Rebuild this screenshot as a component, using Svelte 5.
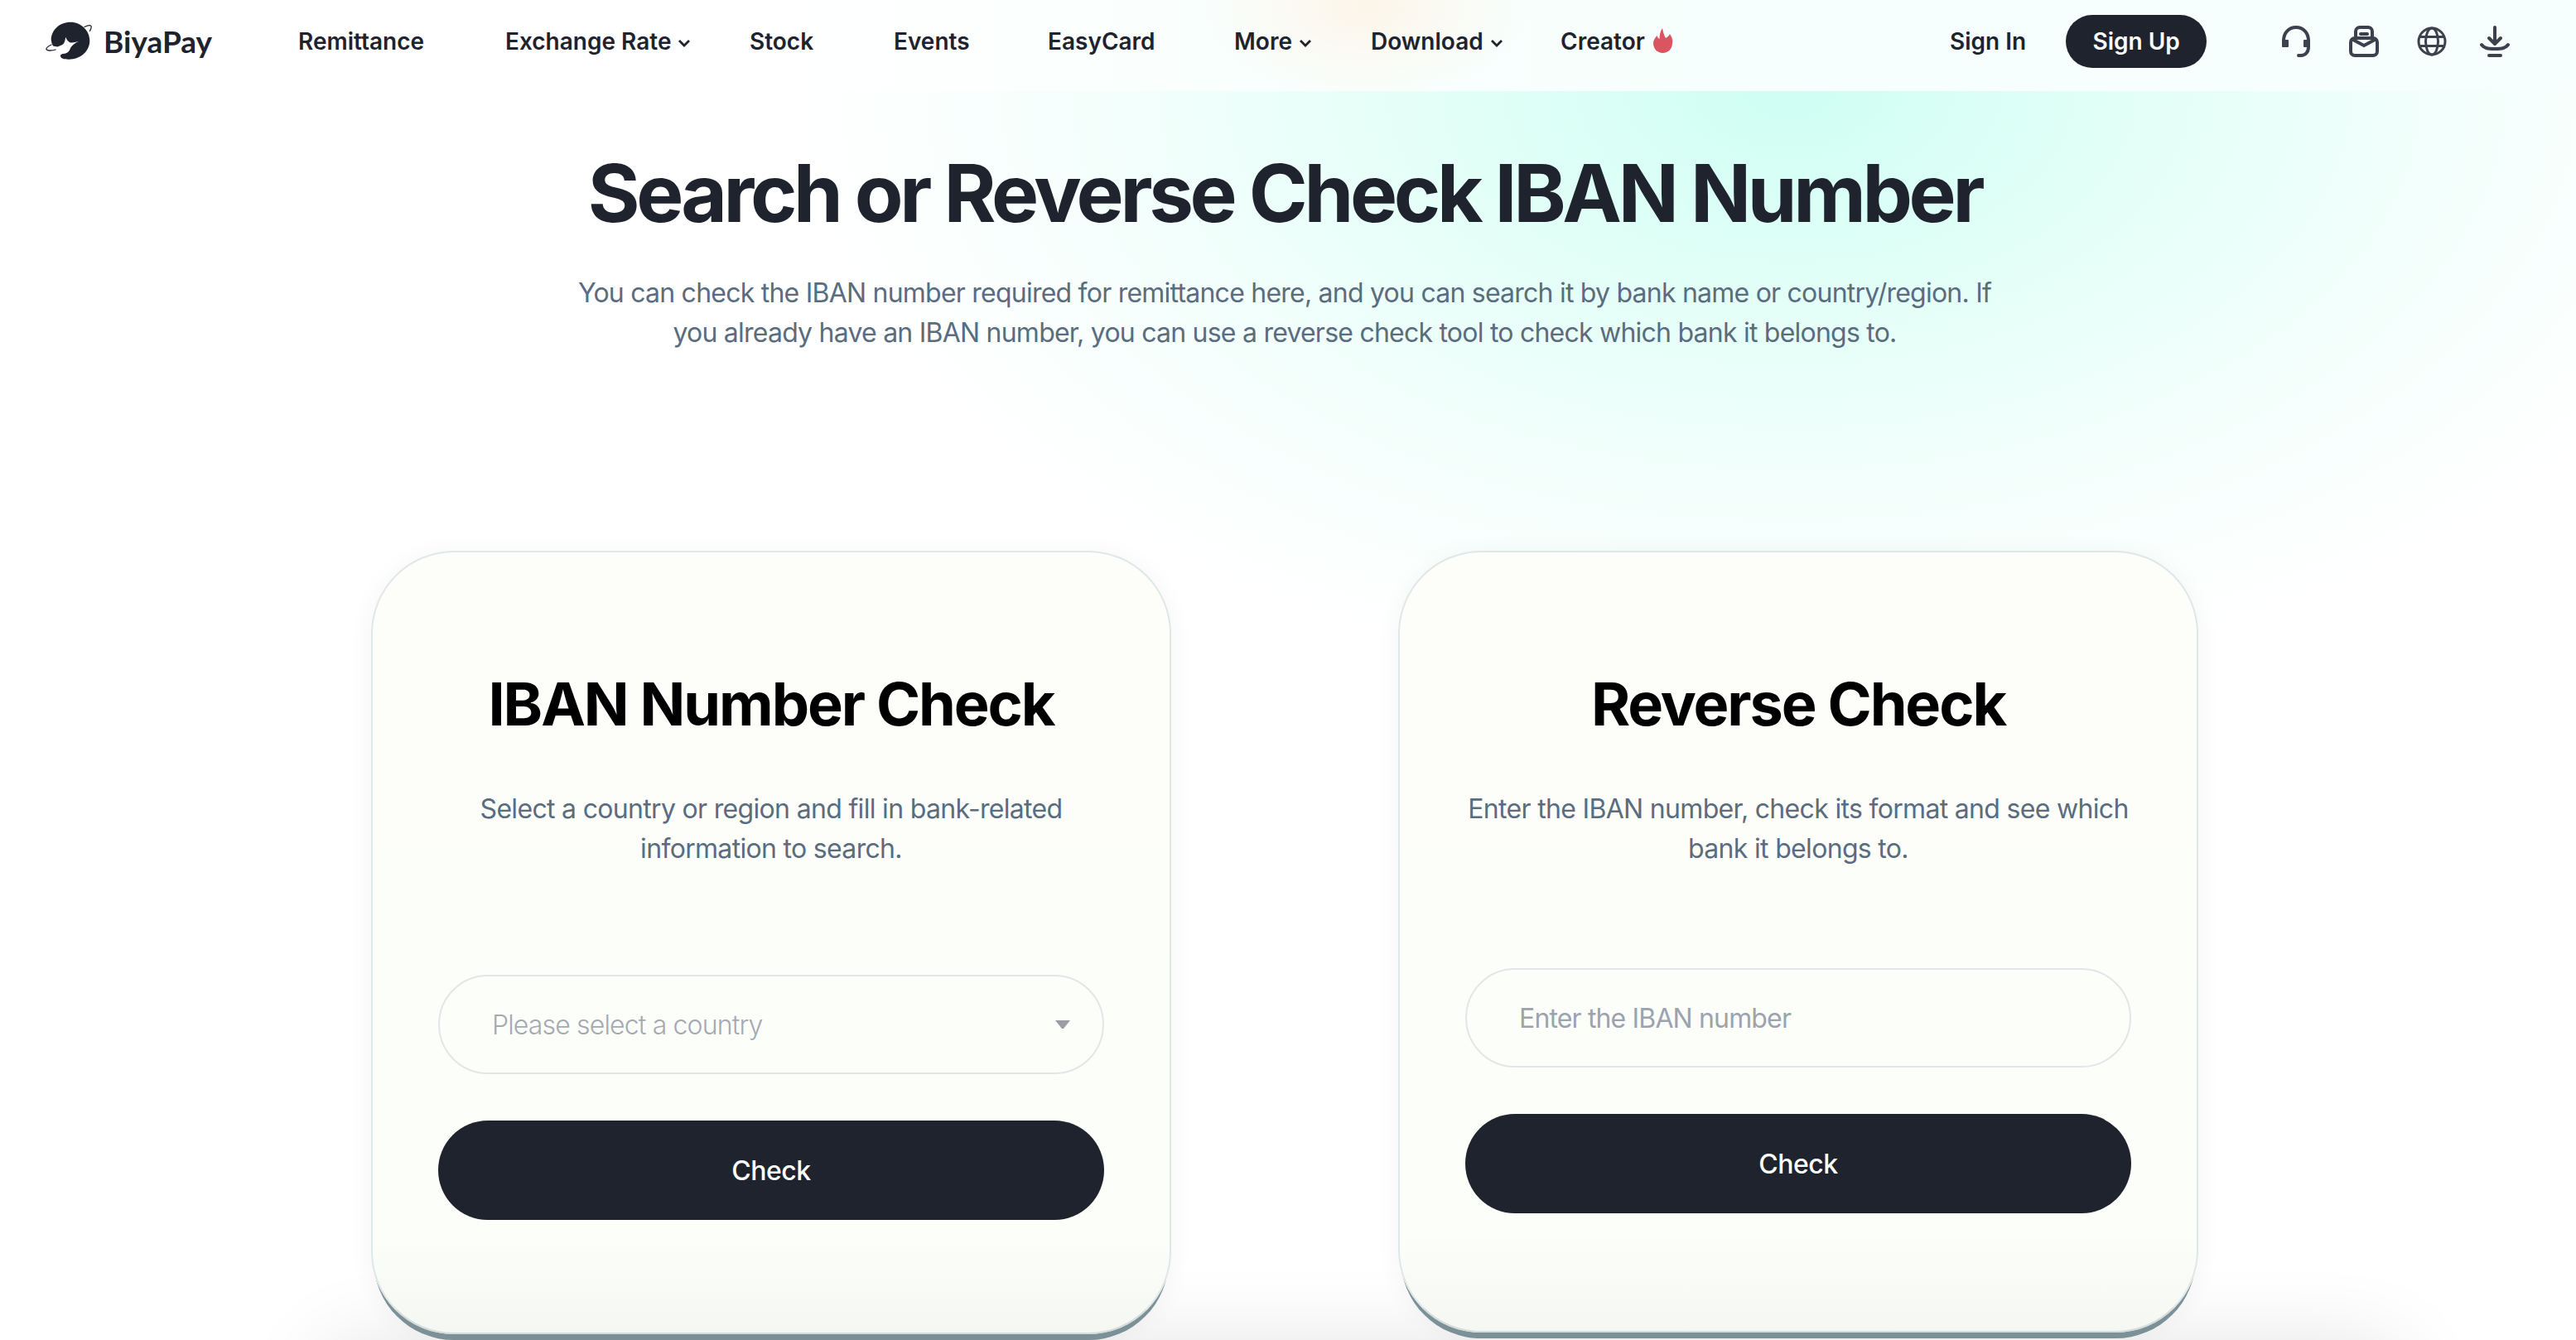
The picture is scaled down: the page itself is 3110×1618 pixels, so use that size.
<script>
  const navItems = [
    { label: 'Remittance', width: 250 },
    { label: 'Exchange Rate', width: 295, caret: true },
    { label: 'Stock', width: 174 },
    { label: 'Events', width: 186 },
    { label: 'EasyCard', width: 225 },
    { label: 'More', width: 165, caret: true },
    { label: 'Download', width: 229, caret: true }
  ];
</script>

<div class="page">
  <header class="topbar">
    <div class="brand">
      <svg class="logo" viewBox="0 -1 56 50" width="56" height="50" aria-hidden="true">
        <path fill="#1e232e" d="M6.700 21C7 9 17-.3 30-.3S53.300 10 53.300 22C53.300 35 42 44.700 28 44.700c-7 0-10-1.700-10-4.200 0-2 2.500-2.800 5.300-2.800q5.700-1.700 6.700-6.700 3-5 10-8.300-6 2.300-10 1.700-4-1.400-5.700-6.700-.8 5.300-2 7.300-2.300 3-8 4.400L9 28.400Q7 25 6.700 21z" />
        <path fill="none" stroke="#1e232e" stroke-width="1.300" stroke-linecap="round" d="M7 27c-4 2-6.500 4-6 5.500.6 1.800 6 2 11 .5M47 5.500c3-1.500 7-2.500 8-1 .7 1.200-.5 4-1.500 6" />
      </svg>
      <span class="brand-name">BiyaPay</span>
    </div>

    <nav class="nav">
      {#each navItems as item}
        <a class="nav-link" href="#top" style="width: {item.width}px">
          {item.label}
          {#if item.caret}
            <svg class="caret" viewBox="0 0 16 10" width="16" height="10" aria-hidden="true">
              <path d="M2 2l6 6 6-6" fill="none" stroke="#1e232e" stroke-width="2.800" />
            </svg>
          {/if}
        </a>
      {/each}
      <a class="nav-link" href="#top">
        Creator
        <svg class="flame" viewBox="0 0 24 30" width="24" height="30" aria-hidden="true">
          <path fill="#d95560" d="M11 0c1 5 2 9 4 12 2-1 4-3 5-5 2 3 4 7 3 11 0 7-5 12-11.500 12S0 25 0 18c0-3 2-6 4.500-9 .5 2 1.500 3 3 4 0-5 1-9 3.500-13z" />
        </svg>
      </a>
    </nav>

    <div class="account">
      <a class="sign-in" href="#top">Sign In</a>
      <button class="sign-up">Sign Up</button>
    </div>

    <div class="tools">
      <svg viewBox="0 0 36 38" width="36" height="38" fill="none" stroke="#3c424d" stroke-width="4" aria-hidden="true">
        <path d="M3 24V18C3 9 9 2 18 2s15 7 15 16v8c0 6-4 10-9 10h-3" stroke-linecap="round" />
        <rect x="1" y="17" width="8" height="9" rx="1" fill="#3c424d" stroke="none" />
        <rect x="27" y="17" width="6" height="9" rx="1" fill="#3c424d" stroke="none" />
      </svg>
      <svg viewBox="0 0 36 38" width="36" height="38" fill="none" stroke="#3c424d" stroke-width="4" aria-hidden="true">
        <path d="M8 15V7a5 5 0 0 1 5-5h10a5 5 0 0 1 5 5v8" />
        <rect x="2" y="15" width="32" height="21" rx="5" />
        <path d="M3 16l15 8 15-8" />
        <path d="M14 10h8" stroke-linecap="round" />
      </svg>
      <svg viewBox="0 0 36 36" width="36" height="36" fill="none" stroke="#3c424d" stroke-width="3" aria-hidden="true">
        <circle cx="18" cy="18" r="16" />
        <ellipse cx="18" cy="18" rx="7.500" ry="16" />
        <path d="M3 12.500h30M3 23.500h30" />
      </svg>
      <svg class="tool-last" viewBox="0 0 36 38" width="36" height="38" fill="none" stroke="#3c424d" stroke-width="4" stroke-linecap="round" aria-hidden="true">
        <path d="M18 2v20M11 15l7 7 7-7" stroke-linejoin="round" />
        <path d="M2 23c3 4 7 5 16 5s13-1 16-5" />
        <path d="M11 36h14" />
      </svg>
    </div>
  </header>

  <main class="content">
    <h1>Search or Reverse Check IBAN Number</h1>
    <p class="intro">
      You can check the IBAN number required for remittance here, and you can search it by bank name or country/region. If you already have an IBAN number, you can use a reverse check tool to check which bank it belongs to.
    </p>

    <div class="cards">
      <section class="card">
        <h2>IBAN Number Check</h2>
        <p class="desc">Select a country or region and fill in bank-related information to search.</p>
        <div class="field select-field">
          <span class="select-text">Please select a country</span>
          <svg viewBox="0 0 20 12" width="20" height="12" aria-hidden="true">
            <path d="M1 1h18l-8 10h-2z" fill="#9a9da1" />
          </svg>
        </div>
        <button class="check">Check</button>
      </section>

      <section class="card card-short">
        <h2>Reverse Check</h2>
        <p class="desc">Enter the IBAN number, check its format and see which bank it belongs to.</p>
        <input class="field iban-input" placeholder="Enter the IBAN number" />
        <button class="check">Check</button>
      </section>
    </div>

    <div class="lower"></div>
  </main>
</div>

<style>
  :global(body) {
    margin: 0;
    font-family: Inter, "Liberation Sans", sans-serif;
    color: #1e232e;
  }

  .page {
    width: 3110px;
    height: 1618px;
    overflow: hidden;
    background: radial-gradient(ellipse 1200px 720px at 2160px 110px, #cffef3 0%, #e0fff7 30%, #f0fffb 60%, #fafffe 85%, #ffffff 100%);
  }

  .topbar {
    height: 110px;
    display: flex;
    align-items: center;
    padding: 0 0 10px 55px;
    box-sizing: border-box;
    background:
      radial-gradient(ellipse 200px 110px at 1650px 10px, rgba(253, 243, 228, 0.8) 0%, rgba(253, 243, 228, 0) 100%),
      linear-gradient(90deg, #ffffff 0%, #ffffff 30%, #fafffe 45%, #f6fffd 70%, #f7fffe 100%);
  }

  .brand {
    width: 305px;
    display: flex;
    align-items: center;
    gap: 14px;
  }

  .logo {
    margin-top: 2px;
  }

  .brand-name {
    font-family: Lato, Inter, sans-serif;
    font-size: 37px;
    font-weight: 700;
    margin-top: -2px;
  }

  .nav {
    display: flex;
    align-items: center;
    width: 1994px;
  }

  .nav-link {
    display: flex;
    align-items: center;
    gap: 8px;
    font-size: 28px;
    font-weight: 600;
    color: #1e232e;
    text-decoration: none;
    white-space: nowrap;
  }

  .caret {
    margin-top: 3px;
  }

  .flame {
    margin: -3px 0 0 2px;
  }

  .account {
    display: flex;
    align-items: center;
    gap: 48px;
  }

  .sign-in {
    font-size: 28px;
    font-weight: 600;
    color: #1e232e;
    text-decoration: none;
  }

  .sign-up {
    width: 170px;
    height: 64px;
    border: none;
    border-radius: 32px;
    background: #1e232e;
    color: #fff;
    font: 600 28px Inter, sans-serif;
  }

  .tools {
    display: flex;
    align-items: center;
    gap: 46px;
    margin-left: 90px;
  }

  .tool-last {
    margin-left: -6px;
  }

  .content {
    width: 3102px;
    text-align: center;
  }

  h1 {
    margin: 69px 0 0;
    font-size: 96px;
    line-height: 108px;
    font-weight: 650;
    letter-spacing: -4.350px;
  }

  .intro {
    width: 1740px;
    margin: 43px auto 0;
    font-size: 32px;
    line-height: 48px;
    letter-spacing: -0.77px;
    color: #5a6c80;
  }

  .cards {
    position: relative;
    z-index: 1;
    display: flex;
    align-items: flex-start;
    justify-content: center;
    gap: 274px;
    height: 946px;
    margin-top: 239px;
  }

  .card {
    width: 966px;
    height: 946px;
    box-sizing: border-box;
    padding: 138px 79px 0;
    border: 2px solid #e0e7e9;
    border-bottom-color: #d5dcdc;
    border-radius: 100px;
    background: linear-gradient(180deg, #fdfefa 0%, #fcfef9 88%, #f5f7f3 100%);
    box-shadow: 0 10px 0 -3px #7b9097, 0 4px 30px rgba(0, 0, 0, 0.05);
  }

  .card-short {
    height: 944px;
  }

  h2 {
    margin: 0;
    font-size: 72px;
    line-height: 90px;
    font-weight: 700;
    letter-spacing: -2.100px;
    color: #000;
  }

  .desc {
    margin: 58px -10px 0;
    font-size: 32px;
    line-height: 48px;
    letter-spacing: -0.68px;
    color: #5a6c80;
  }

  .field {
    display: flex;
    align-items: center;
    justify-content: space-between;
    width: 100%;
    height: 120px;
    box-sizing: border-box;
    margin-top: 128px;
    padding: 0 38px 0 63px;
    border: 2px solid #e3e6e8;
    border-radius: 60px;
    background: transparent;
    font: 300 32px Inter, sans-serif;
    letter-spacing: -0.85px;
    color: #a4a9b2;
    outline: none;
  }

  .field::placeholder {
    color: #9ca3ae;
    font-weight: 400;
  }

  .iban-input {
    margin-top: 120px;
  }

  .check {
    display: block;
    width: 100%;
    height: 120px;
    margin-top: 56px;
    border: none;
    border-radius: 60px;
    background: #1e232e;
    color: #fff;
    font: 500 32px Inter, sans-serif;
    letter-spacing: -0.5px;
  }

  .lower {
    width: 2490px;
    height: 200px;
    margin: 24px 0 0 400px;
    background: #fff;
    box-shadow: 0 0 110px rgba(0, 0, 0, 0.14);
  }
</style>
